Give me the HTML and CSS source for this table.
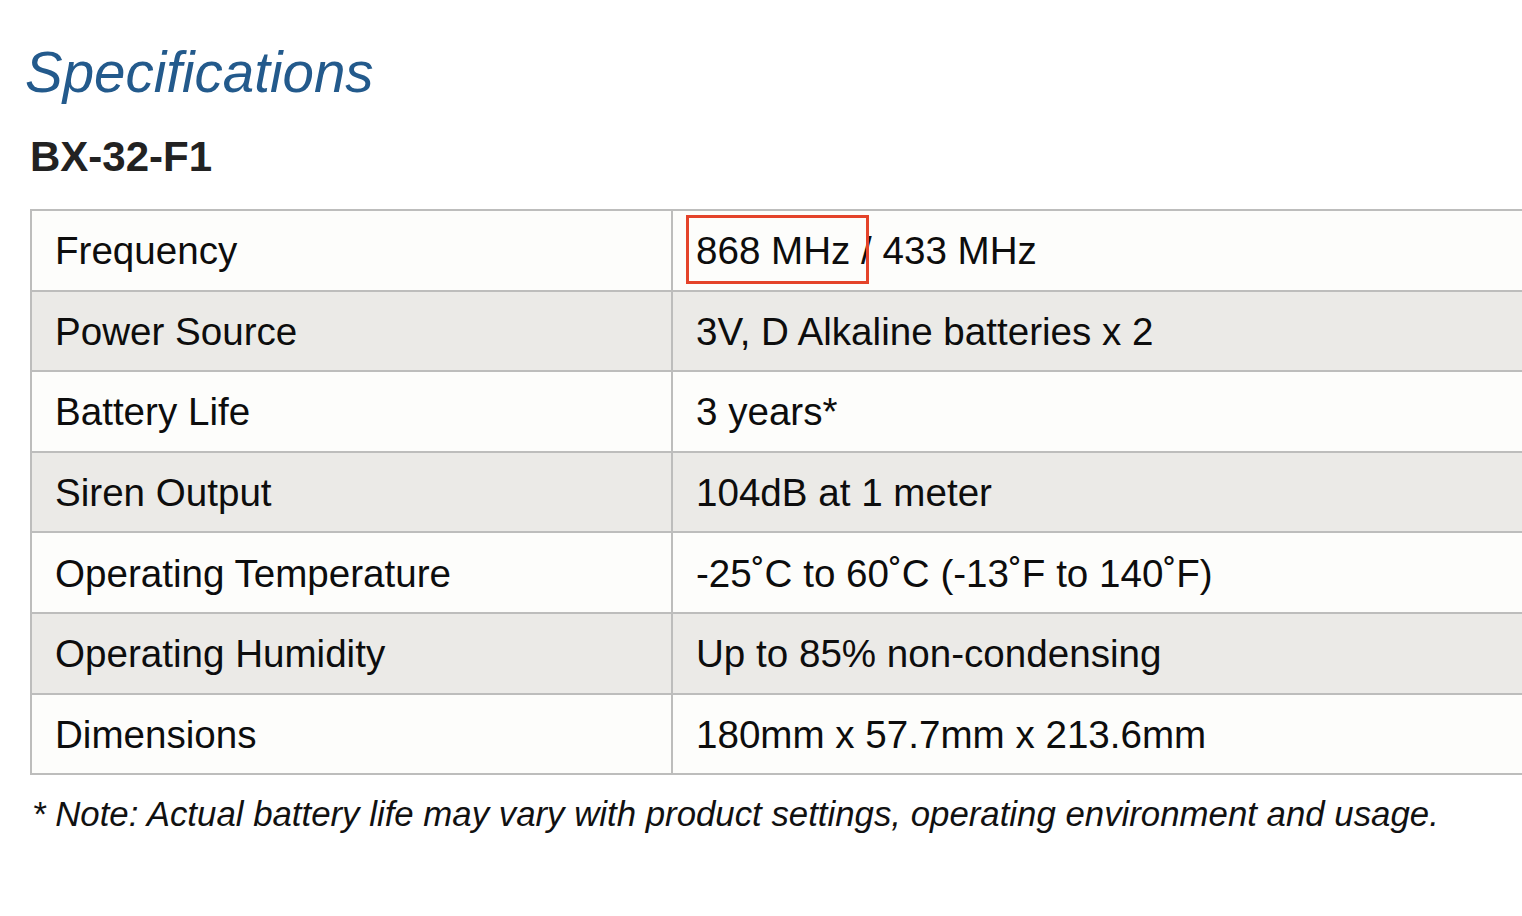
FILE: index.html
```html
<!DOCTYPE html>
<html lang="en">
<head>
<meta charset="utf-8">
<title>Specifications</title>
<link rel="stylesheet" href="styles.css">
</head>
<body>
<main class="page">
  <h2 class="title">Specifications</h2>
  <h3 class="model">BX-32-F1</h3>
  <div class="table-wrap">
    <table class="specs">
      <colgroup><col class="c1"><col class="c2"></colgroup>
      <tbody>
        <tr><td>Frequency</td><td class="freq"><span class="val">868 MHz / 433 MHz</span><span class="highlight"></span></td></tr>
        <tr><td>Power Source</td><td>3V, D Alkaline batteries x 2</td></tr>
        <tr><td>Battery Life</td><td>3 years*</td></tr>
        <tr><td>Siren Output</td><td>104dB at 1 meter</td></tr>
        <tr><td>Operating Temperature</td><td>-25˚C to 60˚C (-13˚F to 140˚F)</td></tr>
        <tr><td>Operating Humidity</td><td>Up to 85% non-condensing</td></tr>
        <tr><td>Dimensions</td><td>180mm x 57.7mm x 213.6mm</td></tr>
      </tbody>
    </table>
  </div>
  <p class="note">* Note: Actual battery life may vary with product settings, operating environment and usage.</p>
</main>
</body>
</html>
```

FILE: styles.css
```css
html, body {
  margin: 0;
  padding: 0;
  background: #ffffff;
  overflow: hidden;
}
body {
  font-family: "Liberation Sans", Arial, Helvetica, sans-serif;
  color: #111111;
}
.page {
  padding: 41px 0 0 0;
}
.title {
  margin: 0;
  padding-left: 25px;
  font-size: 56.5px;
  line-height: 64px;
  font-style: italic;
  font-weight: normal;
  color: #235a8c;
}
.model {
  margin: 28px 0 0 0;
  padding-left: 30px;
  font-size: 42px;
  line-height: 48px;
  font-weight: bold;
  color: #222222;
}
.table-wrap {
  margin-top: 28px;
  padding-left: 30px;
  width: 1640px;
}
.specs {
  border-collapse: collapse;
  width: 1600px;
  table-layout: fixed;
  font-size: 38.6px;
}
.specs .c1 { width: 641px; }
.specs td {
  border: 2px solid #bdbdbc;
  height: 76.6px;
  padding: 2px 23px 0 23px;
  line-height: 44px;
  vertical-align: middle;
  white-space: nowrap;
  color: #0d0d0d;
}
.specs tr:nth-child(odd) td { background: #fdfdfb; }
.specs tr:nth-child(even) td { background: #ebeae7; }
.specs .freq { position: relative; }
.highlight {
  position: absolute;
  left: 13px;
  top: 4px;
  width: 177px;
  height: 63px;
  border: 3px solid #e4432a;
}
.note {
  margin: 19px 0 0 0;
  padding-left: 32px;
  font-size: 34.8px;
  line-height: 40px;
  font-style: italic;
  color: #111111;
}
```
